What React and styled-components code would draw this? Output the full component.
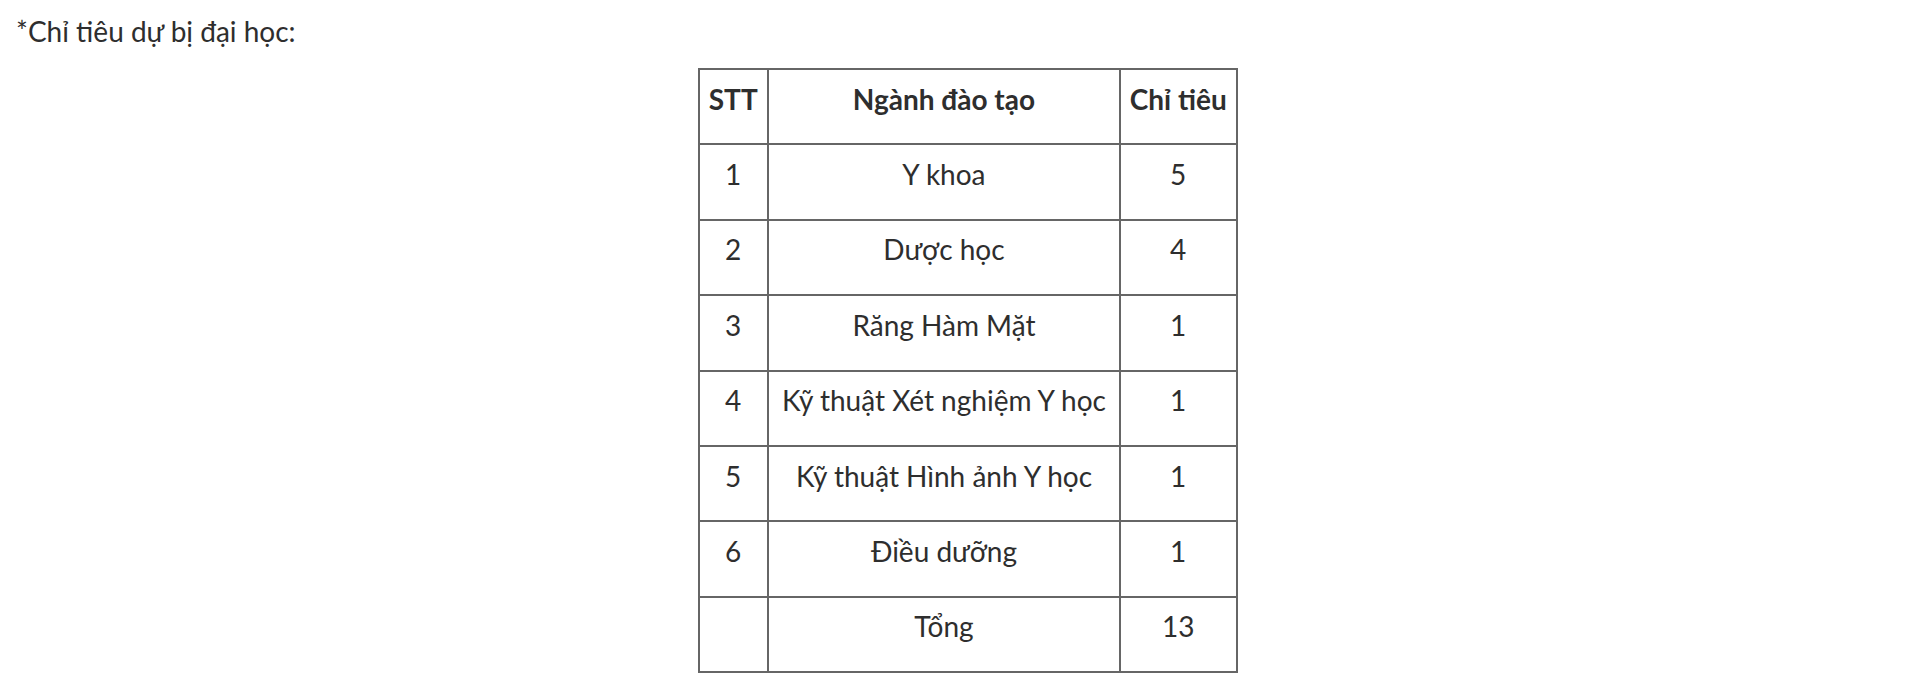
import styled, { createGlobalStyle } from "styled-components";

const GlobalStyle = createGlobalStyle`
  html, body {
    margin: 0;
    padding: 0;
    background: #fff;
  }
  body {
    font-family: Lato, "Noto Sans", sans-serif;
    color: #2e2e2e;
  }
`;

const Article = styled.div`
  padding: 13px 0 0 16px;
`;

const Intro = styled.p`
  margin: 0 0 19px;
  font-size: 28px;
  line-height: 36px;
`;

const Table = styled.table`
  margin: 0 auto;
  border-collapse: collapse;
  width: 540px;
  font-size: 28px;
`;

const Cell = styled.td`
  width: ${(p) => p.$w}px;
  height: 75.4px;
  box-sizing: border-box;
  border: 2px solid #666;
  padding: 0 4px 16px;
  text-align: center;
  vertical-align: middle;
  font-weight: ${(p) => (p.$head ? 700 : 400)};
  white-space: nowrap;
`;

const rows = [
  ["1", "Y khoa", "5"],
  ["2", "Dược học", "4"],
  ["3", "Răng Hàm Mặt", "1"],
  ["4", "Kỹ thuật Xét nghiệm Y học", "1"],
  ["5", "Kỹ thuật Hình ảnh Y học", "1"],
  ["6", "Điều dưỡng", "1"],
  ["", "Tổng", "13"],
];

const widths = [70, 353, 117];

export default function App() {
  return (
    <Article>
      <GlobalStyle />
      <Intro>*Chỉ tiêu dự bị đại học:</Intro>
      <Table>
        <tbody>
          <tr>
            <Cell $w={widths[0]} $head>STT</Cell>
            <Cell $w={widths[1]} $head>Ngành đào tạo</Cell>
            <Cell $w={widths[2]} $head>Chỉ tiêu</Cell>
          </tr>
          {rows.map((r, i) => (
            <tr key={i}>
              {r.map((v, j) => (
                <Cell key={j} $w={widths[j]}>
                  {v}
                </Cell>
              ))}
            </tr>
          ))}
        </tbody>
      </Table>
    </Article>
  );
}
